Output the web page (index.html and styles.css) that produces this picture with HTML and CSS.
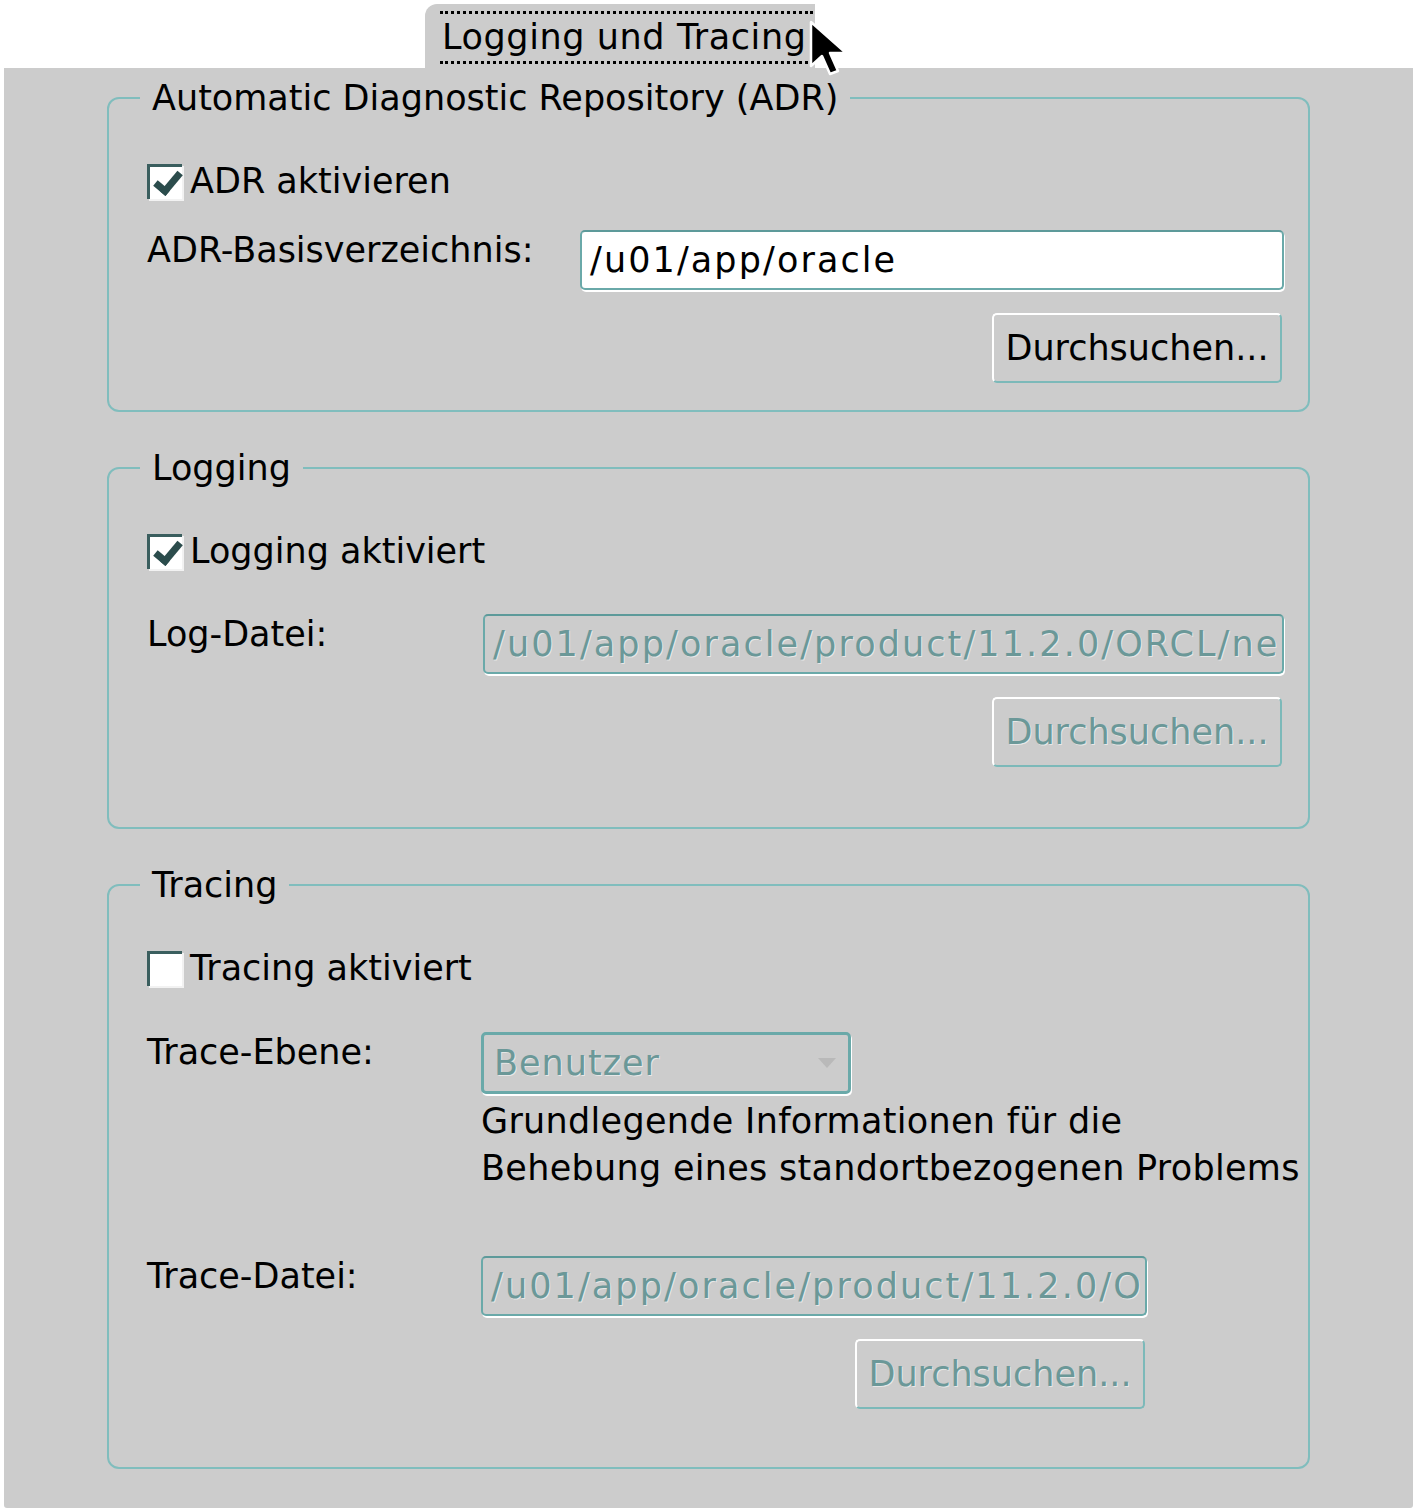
FILE: index.html
```html
<!DOCTYPE html>
<html lang="de">
<head>
<meta charset="utf-8">
<title>Logging und Tracing</title>
<link rel="stylesheet" href="styles.css">
</head>
<body>
<div class="window">
  <div class="tabbar">
    <div class="tab"><span class="tab-label">Logging und Tracing</span></div>
  </div>
  <div class="panel">
    <fieldset class="group group-adr">
      <legend>Automatic Diagnostic Repository (ADR)</legend>
      <label class="check-row"><span class="checkbox checked"></span>ADR aktivieren</label>
      <div class="form-grid grid-adr">
        <div class="field-label">ADR-Basisverzeichnis:</div>
        <div class="field-col">
          <div class="textfield">/u01/app/oracle</div>
          <div class="btn-row"><div class="button">Durchsuchen...</div></div>
        </div>
      </div>
    </fieldset>

    <fieldset class="group group-log">
      <legend>Logging</legend>
      <label class="check-row"><span class="checkbox checked"></span>Logging aktiviert</label>
      <div class="form-grid grid-log">
        <div class="field-label">Log-Datei:</div>
        <div class="field-col">
          <div class="textfield disabled">/u01/app/oracle/product/11.2.0/ORCL/ne</div>
          <div class="btn-row"><div class="button disabled">Durchsuchen...</div></div>
        </div>
      </div>
    </fieldset>

    <fieldset class="group group-trace">
      <legend>Tracing</legend>
      <label class="check-row"><span class="checkbox"></span>Tracing aktiviert</label>
      <div class="form-grid grid-trace">
        <div class="field-label">Trace-Ebene:</div>
        <div class="field-col">
          <div class="combo disabled"><span>Benutzer</span><span class="combo-arrow"></span></div>
          <div class="description">Grundlegende Informationen für die<br>Behebung eines standortbezogenen Problems</div>
        </div>
        <div class="field-label">Trace-Datei:</div>
        <div class="field-col">
          <div class="textfield disabled">/u01/app/oracle/product/11.2.0/O</div>
          <div class="btn-row"><div class="button disabled">Durchsuchen...</div></div>
        </div>
      </div>
    </fieldset>
  </div>

  <svg class="cursor" width="46" height="58" viewBox="0 0 46 58" aria-hidden="true">
    <path d="M3 2 L3 46 L14 36 L22 54 L30 51 L22 33 L38 33 Z" fill="#000" stroke="#fff" stroke-width="2.5" stroke-linejoin="round"/>
  </svg>
</div>
</body>
</html>
```

FILE: styles.css
```css
html, body {
  margin: 0;
  padding: 0;
  background: #ffffff;
}

body {
  font-family: "DejaVu Sans", "Liberation Sans", sans-serif;
  font-size: 35px;
  color: #000;
}

.window {
  position: relative;
  width: 1417px;
  height: 1511px;
}

.tabbar {
  display: flex;
  padding: 4px 0 0 425px;
  height: 64px;
}

.tab {
  width: 390px;
  height: 64px;
  background: #cccccc;
  border-top-left-radius: 12px;
  box-sizing: border-box;
  padding: 7px 0 0 15px;
}

.tab-label {
  display: inline-block;
  height: 47px;
  line-height: 47px;
  padding: 0 6px 0 2px;
  letter-spacing: 0.6px;
  border-top: 3px dotted #000;
  border-bottom: 3px dotted #000;
  white-space: nowrap;
}

.panel {
  margin: 0 4px;
  height: 1440px;
  box-sizing: border-box;
  background: #cccccc;
  padding: 10px 103px 0 103px;
  display: flex;
  flex-direction: column;
  gap: 36px;
  border-bottom-left-radius: 3px;
  border-bottom-right-radius: 3px;
}

.group {
  margin: 0;
  border: 2px solid #80bdbd;
  border-radius: 12px;
  padding: 43px 24px 27px 38px;
  min-inline-size: 0;
}

.group legend {
  padding: 0 12px;
  margin-left: -7px;
  line-height: 40px;
  white-space: nowrap;
}

.group-log { padding-bottom: 60px; }
.group-trace { padding-bottom: 58px; }

.check-row {
  display: flex;
  align-items: center;
  height: 40px;
  gap: 8px;
  white-space: nowrap;
}

.checkbox {
  width: 35px;
  height: 35px;
  box-sizing: border-box;
  background: #ffffff;
  border-top: 3px solid #3a5e5e;
  border-left: 3px solid #3a5e5e;
  box-shadow: 2px 2px 0 #f2f2f2;
  position: relative;
}

.checkbox.checked::after {
  content: "";
  position: absolute;
  left: 10px;
  top: 0;
  width: 9px;
  height: 20px;
  border-right: 7px solid #2b4c4c;
  border-bottom: 7px solid #2b4c4c;
  transform: rotate(40deg);
}

.form-grid {
  display: grid;
  align-items: start;
}

.grid-adr { grid-template-columns: 433px 1fr; margin-top: 29px; }
.grid-log { grid-template-columns: 336px 1fr; margin-top: 43px; }
.grid-trace { grid-template-columns: 334px 666px; margin-top: 44px; row-gap: 64px; }

.field-label {
  line-height: 40px;
  white-space: nowrap;
}

.field-col {
  display: flex;
  flex-direction: column;
  min-width: 0;
}

.textfield {
  height: 60px;
  box-sizing: border-box;
  border: 2px solid #6aa9a9;
  border-top-color: #5d9a9a;
  border-radius: 5px;
  background: #ffffff;
  box-shadow: 1px 2px 0 #ffffff;
  padding: 0 4px 0 8px;
  line-height: 56px;
  letter-spacing: 2.1px;
  white-space: nowrap;
  overflow: hidden;
}

.disabled {
  color: #6b9898;
  text-shadow: 1px 1px 0 rgba(255, 255, 255, 0.55);
}

.textfield.disabled {
  background: #cccccc;
}

.btn-row {
  display: flex;
  justify-content: flex-end;
  margin-top: 23px;
  padding-right: 2px;
}

.button {
  width: 290px;
  height: 70px;
  box-sizing: border-box;
  border: 2px solid #7cb9b9;
  border-top-color: #ffffff;
  border-left-color: #ffffff;
  border-radius: 5px;
  display: flex;
  align-items: center;
  justify-content: center;
  white-space: nowrap;
}

.combo {
  width: 370px;
  height: 62px;
  box-sizing: border-box;
  border: 3px solid #6aa9a9;
  border-radius: 5px;
  box-shadow: 1px 2px 0 #ffffff;
  display: flex;
  align-items: center;
  justify-content: space-between;
  padding: 0 12px 0 10px;
  background: #cccccc;
  letter-spacing: 1px;
}

.combo-arrow {
  width: 0;
  height: 0;
  border-left: 9px solid transparent;
  border-right: 9px solid transparent;
  border-top: 10px solid #b9b9b9;
}

.description {
  margin-top: 4px;
  line-height: 47px;
  white-space: nowrap;
  letter-spacing: 0.3px;
}

.cursor {
  position: absolute;
  left: 808px;
  top: 20px;
}
```
